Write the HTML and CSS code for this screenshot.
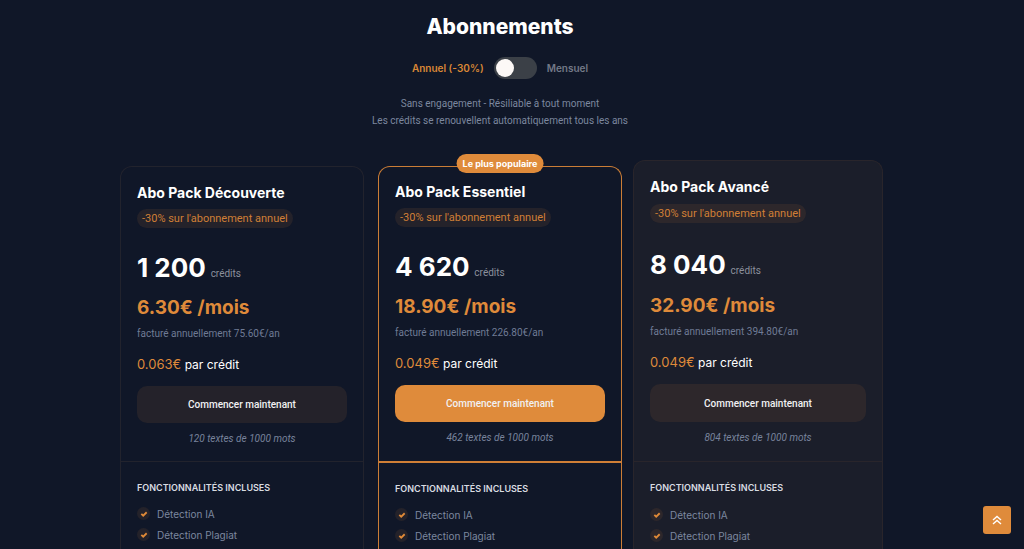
FILE: index.html
```html
<!DOCTYPE html>
<html lang="fr">
<head>
    <meta charset="UTF-8">
    <meta name="viewport" content="width=device-width, initial-scale=1.0">
    <title>Abonnements</title>
    <link rel="stylesheet" href="styles.css">
</head>
<body>
    <svg class="sprite" aria-hidden="true">
        <symbol id="check" viewBox="0 0 12 12">
            <path d="M2 5.8 L4.8 8.4 L10 3.4" fill="none" stroke="currentColor" stroke-width="2.8"/>
        </symbol>
    </svg>

    <main class="page">
        <h1>Abonnements</h1>

        <div class="billing">
            <label class="billing-on" for="billing">Annuel (-30%)</label>
            <input type="checkbox" role="switch" id="billing" class="switch">
            <label class="billing-off" for="billing">Mensuel</label>
        </div>

        <p class="intro">Sans engagement - Résiliable à tout moment<br>Les crédits se renouvellent automatiquement tous les ans</p>

        <div class="plans">
            <article class="plan">
                <div class="plan-top">
                    <h2>Abo Pack Découverte</h2>
                    <span class="discount">-30% sur l'abonnement annuel</span>
                    <p class="credits"><strong>1 200</strong> <span>crédits</span></p>
                    <p class="price">6.30€ /mois</p>
                    <p class="billed">facturé annuellement 75.60€/an</p>
                    <p class="per-credit"><span>0.063€</span> par crédit</p>
                    <button type="button" class="start">Commencer maintenant</button>
                    <p class="texts">120 textes de 1000 mots</p>
                </div>
                <div class="features">
                    <h3>FONCTIONNALITÉS INCLUSES</h3>
                    <ul>
                        <li><span class="tick"><svg><use href="#check"/></svg></span>Détection IA</li>
                        <li><span class="tick"><svg><use href="#check"/></svg></span>Détection Plagiat</li>
                    </ul>
                </div>
            </article>

            <article class="plan popular">
                <span class="ribbon">Le plus populaire</span>
                <div class="plan-top">
                    <h2>Abo Pack Essentiel</h2>
                    <span class="discount">-30% sur l'abonnement annuel</span>
                    <p class="credits"><strong>4 620</strong> <span>crédits</span></p>
                    <p class="price">18.90€ /mois</p>
                    <p class="billed">facturé annuellement 226.80€/an</p>
                    <p class="per-credit"><span>0.049€</span> par crédit</p>
                    <button type="button" class="start">Commencer maintenant</button>
                    <p class="texts">462 textes de 1000 mots</p>
                </div>
                <div class="features">
                    <h3>FONCTIONNALITÉS INCLUSES</h3>
                    <ul>
                        <li><span class="tick"><svg><use href="#check"/></svg></span>Détection IA</li>
                        <li><span class="tick"><svg><use href="#check"/></svg></span>Détection Plagiat</li>
                    </ul>
                </div>
            </article>

            <article class="plan active">
                <div class="plan-top">
                    <h2>Abo Pack Avancé</h2>
                    <span class="discount">-30% sur l'abonnement annuel</span>
                    <p class="credits"><strong>8 040</strong> <span>crédits</span></p>
                    <p class="price">32.90€ /mois</p>
                    <p class="billed">facturé annuellement 394.80€/an</p>
                    <p class="per-credit"><span>0.049€</span> par crédit</p>
                    <button type="button" class="start">Commencer maintenant</button>
                    <p class="texts">804 textes de 1000 mots</p>
                </div>
                <div class="features">
                    <h3>FONCTIONNALITÉS INCLUSES</h3>
                    <ul>
                        <li><span class="tick"><svg><use href="#check"/></svg></span>Détection IA</li>
                        <li><span class="tick"><svg><use href="#check"/></svg></span>Détection Plagiat</li>
                    </ul>
                </div>
            </article>
        </div>
    </main>

    <a href="#" class="to-top" aria-label="Haut de page">
        <svg viewBox="0 0 10 10"><path d="M1 5 L5 1.5 L9 5 M1 9 L5 5.5 L9 9" fill="none" stroke="currentColor" stroke-width="1.4"/></svg>
    </a>
</body>
</html>
```
FILE: styles.css
```css
* {
    margin: 0;
    padding: 0;
    box-sizing: border-box;
}

body {
    background: #101728;
    color: #fff;
    font-family: Inter, sans-serif;
    font-size: 10px;
}

.sprite {
    display: none;
}

.page {
    padding: 12px 24px 0 0;
}

h1 {
    font-size: 21px;
    font-weight: 800;
    line-height: 30px;
    text-align: center;
}

.billing {
    display: flex;
    justify-content: center;
    align-items: center;
    gap: 10px;
    margin-top: 15px;
    font-weight: 600;
}

.billing-on {
    color: #d98736;
}

.billing-off {
    color: #737987;
}

.switch {
    appearance: none;
    width: 43px;
    height: 22px;
    padding: 2px;
    border-radius: 11px;
    background: #3b4047;
    cursor: pointer;
}

.switch::before {
    content: "";
    display: block;
    width: 18px;
    height: 18px;
    border-radius: 50%;
    background: #fcf8f6;
}

.switch:checked::before {
    margin-left: auto;
}

.intro,
.discount,
.billed,
.credits span,
.start,
.texts {
    font-family: Roboto, sans-serif;
}

.intro {
    margin-top: 16px;
    line-height: 17px;
    text-align: center;
    color: #7c879f;
}

.plans {
    display: grid;
    grid-template-columns: repeat(3, 1fr);
    gap: 14px;
    max-width: 760px;
    margin: 37px auto 0;
}

.plan {
    position: relative;
    border: 1px solid #22232d;
    border-bottom: none;
    border-radius: 12px 12px 0 0;
}

.plan-top {
    display: flex;
    flex-direction: column;
    min-height: 294px;
    padding: 16px 16px 0;
}

.plan h2 {
    font-size: 14px;
    line-height: 19px;
}

.discount {
    align-self: flex-start;
    margin-top: 7px;
    padding: 0 5px;
    border-radius: 10px;
    font-size: 11px;
    line-height: 19px;
    background: #24222a;
    color: #d07f36;
}

.credits {
    margin-top: 23px;
    line-height: 34px;
    color: #8b909c;
}

.credits strong {
    margin-right: 2px;
    font-size: 26px;
    color: #fff;
}

.price {
    margin-top: 4px;
    font-size: 19px;
    font-weight: 700;
    line-height: 26px;
    color: #df8a3a;
}

.billed {
    margin-top: 6px;
    line-height: 14px;
    color: #6f7b95;
}

.per-credit {
    margin-top: 14px;
    font-size: 12px;
    line-height: 18px;
}

.per-credit span {
    font-size: 13px;
    color: #df8a3a;
}

.start {
    height: 37px;
    margin-top: 12px;
    border: none;
    border-radius: 10px;
    background: #24222a;
    color: #f1f1f3;
    font-size: 10px;
    font-weight: 500;
    cursor: pointer;
}

.texts {
    margin-top: 9px;
    line-height: 14px;
    font-style: italic;
    text-align: center;
    color: #78839c;
}

.features {
    padding: 19px 16px;
    border-top: 1px solid #22232d;
}

.features h3 {
    font-size: 9px;
    font-weight: 600;
    line-height: 13px;
    color: #d9dce2;
}

.features ul {
    margin-top: 9px;
    list-style: none;
}

.features li {
    display: flex;
    align-items: center;
    gap: 7px;
    height: 21px;
    color: #7c879f;
}

.tick {
    display: grid;
    place-items: center;
    width: 13px;
    height: 13px;
    border-radius: 50%;
    background: #24222a;
    color: #e08a38;
}

.tick svg {
    width: 8px;
    height: 8px;
}

.popular {
    border-color: #cb7d36;
}

.popular .plan-top {
    padding-top: 15px;
}

.popular .start {
    background: #df8b3b;
}

.popular .features {
    border-top: 2px solid #d07f36;
}

.ribbon {
    position: absolute;
    top: -13px;
    left: 50%;
    transform: translateX(-50%);
    padding: 0 6px;
    border-radius: 10px;
    background: #df8b3b;
    font-size: 9px;
    font-weight: 700;
    line-height: 19px;
    white-space: nowrap;
}

/* raised card */
.active {
    margin: -6px -3px 0;
    border-color: #29252b;
    background: #1b1e2a;
}

.active .plan-top {
    min-height: 300px;
}

.active .discount {
    margin-top: 8px;
}

.active .credits {
    margin-top: 25px;
}

.active .price {
    margin-top: 5px;
}

.active .start {
    height: 38px;
}

.active .discount,
.active .start,
.active .tick {
    background: #2d272b;
}

.active .features {
    border-color: #29252b;
}

.active .features ul {
    margin-top: 10px;
}

.to-top {
    position: fixed;
    right: 13px;
    bottom: 15px;
    display: grid;
    place-items: center;
    width: 28px;
    height: 28px;
    border-radius: 3px;
    background: #df8b3b;
    color: #fff;
}

.to-top svg {
    width: 10px;
    height: 10px;
}
```
